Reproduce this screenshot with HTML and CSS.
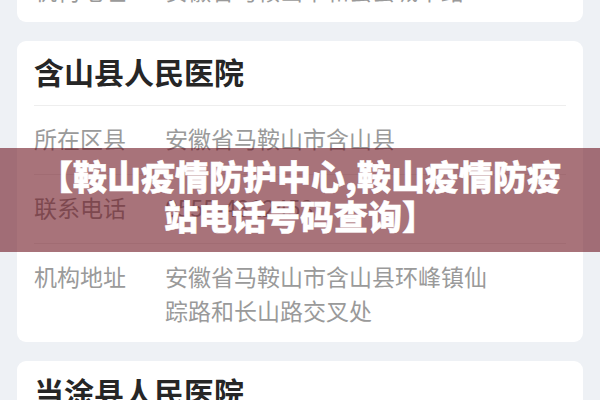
FILE: index.html
```html
<!DOCTYPE html>
<html lang="zh-CN">
<head>
  <meta charset="UTF-8">
  <title>鞍山疫情防护中心,鞍山疫情防疫站电话号码查询</title>
  <link rel="stylesheet" href="styles.css">
</head>
<body>

  <main class="lista">

    <section class="tarjeta">
      <h2 class="nombre">和县人民医院</h2>
      <div class="fila">
        <span class="etiqueta">所在区县</span>
        <span class="valor">安徽省马鞍山市和县</span>
      </div>
      <div class="fila">
        <span class="etiqueta">联系电话</span>
        <span class="valor">0555-5312120</span>
      </div>
      <div class="fila">
        <span class="etiqueta">机构地址</span>
        <span class="valor">安徽省马鞍山市和县县城中路</span>
      </div>
    </section>

    <section class="tarjeta">
      <h2 class="nombre">含山县人民医院</h2>
      <div class="fila">
        <span class="etiqueta">所在区县</span>
        <span class="valor">安徽省马鞍山市含山县</span>
      </div>
      <div class="fila">
        <span class="etiqueta">联系电话</span>
        <span class="valor">0555-4312453</span>
      </div>
      <div class="fila">
        <span class="etiqueta">机构地址</span>
        <span class="valor">安徽省马鞍山市含山县环峰镇仙踪路和长山路交叉处</span>
      </div>
    </section>

    <section class="tarjeta">
      <h2 class="nombre">当涂县人民医院</h2>
      <div class="fila">
        <span class="etiqueta">所在区县</span>
        <span class="valor">安徽省马鞍山市当涂县</span>
      </div>
    </section>

  </main>

  <!-- Franja con el titular encima de la lista -->
  <div class="franja">
    <h1 class="titular">【鞍山疫情防护中心,鞍山疫情防疫站电话号码查询】</h1>
  </div>

</body>
</html>
```

FILE: styles.css
```css
body {
  margin: 0;
  height: 100vh;
  overflow: hidden;
  background-color: #eef1f5;
  font-family: "Noto Sans CJK SC", "Noto Sans", sans-serif;
}

.lista {
  display: flex;
  flex-direction: column;
  gap: 19px;
  padding: 0 17px;
  margin-top: -245px; /* la lista ya está desplazada */
}

.tarjeta {
  background-color: #fff;
  border-radius: 9px;
  padding: 0 17px;
}

.nombre {
  margin: 0;
  padding: 10px 0 14px;
  font-size: 30px;
  line-height: 40px;
  font-weight: bold;
  color: #262626;
  border-bottom: 1px solid #eeeeee;
}

.fila {
  display: flex;
  padding: 15px 0 19px;
  font-size: 23px;
  line-height: 34px;
  color: #9a9a9a;
  border-bottom: 1px solid #eeeeee;
}

.fila:last-child {
  border-bottom: none;
  padding-bottom: 15px;
}

.etiqueta {
  flex: 0 0 131px;
}

.valor {
  flex: 1;
  padding-right: 70px;
}

.franja {
  position: absolute;
  top: 148px;
  left: 0;
  right: 0;
  height: 104px;
  display: flex;
  align-items: center;
  justify-content: center;
  padding: 0 38px 8px;
  box-sizing: border-box;
  background-color: rgba(105, 14, 26, 0.58);
}

.titular {
  margin: 0;
  font-size: 34px;
  line-height: 40px;
  font-weight: 900;
  color: #fff;
  -webkit-text-stroke: 0.5px #fff;
  text-align: center;
}
```
